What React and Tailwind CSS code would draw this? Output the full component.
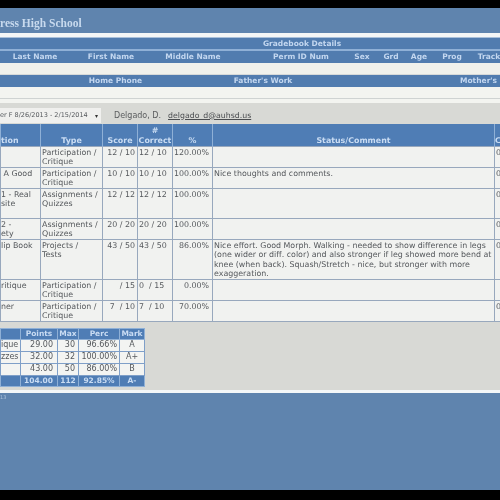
const sans = { fontFamily: '"DejaVu Sans", sans-serif' };

const studentCols = [
  ['Last Name', 'w-[70px]'],
  ['First Name', 'w-[82px]'],
  ['Middle Name', 'w-[82px]'],
  ['', 'w-[23px]'],
  ['Perm ID Num', 'w-[88px]'],
  ['Sex', 'w-[34px]'],
  ['Grd', 'w-[24px]'],
  ['Age', 'w-[32px]'],
  ['Prog', 'w-[34px]'],
  ['Track', 'w-[40px]'],
];

const rows = [
  { h: 'h-[21px]', name: '', type: 'Participation /\nCritique', score: '12 / 10', correct: '12 / 10', pct: '120.00%', comment: '', last: '0' },
  { h: 'h-[21px]', name: ' A Good', type: 'Participation /\nCritique', score: '10 / 10', correct: '10 / 10', pct: '100.00%', comment: 'Nice thoughts and comments.', last: '0' },
  { h: 'h-[30px]', name: '1 - Real\nsite', type: 'Assignments /\nQuizzes', score: '12 / 12', correct: '12 / 12', pct: '100.00%', comment: '', last: '0' },
  { h: 'h-[21px]', name: '2 -\nety', type: 'Assignments /\nQuizzes', score: '20 / 20', correct: '20 / 20', pct: '100.00%', comment: '', last: '0' },
  { h: 'h-[40px]', name: 'lip Book', type: 'Projects /\nTests', score: '43 / 50', correct: '43 / 50', pct: '86.00%', comment: 'Nice effort. Good Morph. Walking - needed to show difference in legs (one wider or diff. color) and also stronger if leg showed more bend at knee (when back). Squash/Stretch - nice, but stronger with more exaggeration.', last: '0' },
  { h: 'h-[21px]', name: 'ritique', type: 'Participation /\nCritique', score: '/ 15', correct: '0\u00a0 / 15', pct: '0.00%', comment: '', last: '' },
  { h: 'h-[21px]', name: 'ner', type: 'Participation /\nCritique', score: '7\u00a0 / 10', correct: '7\u00a0 / 10', pct: '70.00%', comment: '', last: '0' },
];

const summary = [
  ['ique', '29.00', '30', '96.66%', 'A'],
  ['zzes', '32.00', '32', '100.00%', 'A+'],
  ['', '43.00', '50', '86.00%', 'B'],
];

const th = 'border-x border-[#8fb0d6] align-bottom pb-0 leading-[10px] font-bold text-[#c9dcf3]';
const td = 'border border-[#98a8bd] align-top pt-px leading-[9.5px]';
const sumTh = 'border border-[#8fb0d6] font-bold text-[7.5px] text-[#c9dcf3]';
const sumTd = 'border border-[#7f9fc8]';

export default function App() {
  return (
    <div className="w-[500px] h-[500px] bg-black overflow-hidden">
      <div style={sans} className="mt-[8px] h-[482px] flex flex-col bg-[#5f84ae] blur-[0.7px] text-[7.5px]">
        <div className="h-[25px] pt-[6px] flex items-center font-bold text-[11.5px] text-[#c8daee] [font-family:'Liberation_Serif',serif]">
          ress High School
        </div>
        <div className="h-[4px] bg-[#f4f6f6]" />
        <div className="h-px bg-[#a9c0da]" />
        <div className="h-[11px] bg-[#517caf] flex items-center font-bold text-[#c3d7f0]">
          <span className="w-[500px] pl-[104px] text-center">Gradebook Details</span>
        </div>
        <div className="h-[2px] bg-[#8fb0d6]" />
        <div className="h-[12px] bg-[#517caf] flex items-center font-bold text-[#c3d7f0]">
          {studentCols.map(([label, w]) => (
            <span key={w + label} className={`${w} shrink-0 text-center whitespace-nowrap`}>{label}</span>
          ))}
        </div>
        <div className="h-[11px] bg-[#f0f1ec]" />
        <div className="h-px bg-[#d7dad9]" />
        <div className="h-[12px] bg-[#517caf] flex items-center font-bold text-[#c3d7f0]">
          <span className="w-[88px] shrink-0" />
          <span className="w-[55px] shrink-0 text-center whitespace-nowrap">Home Phone</span>
          <span className="w-[90px] shrink-0" />
          <span className="w-[60px] shrink-0 text-center whitespace-nowrap">Father's Work</span>
          <span className="w-[167px] shrink-0" />
          <span className="whitespace-nowrap">Mother's</span>
        </div>
        <div className="h-[11px] bg-[#f3f4f0]" />
        <div className="h-px bg-[#cfd3d2]" />
        <div className="h-[4px] bg-[#f3f4f0]" />

        <div className="h-[287px] bg-[#d8d9d5] text-[#55585c]">
          <div className="h-[21px] flex items-center pt-[4px]">
            <div className="w-[101px] h-[15px] bg-[#f0f0ee] flex items-center justify-between pr-[3px] text-[6.5px] whitespace-nowrap overflow-hidden">
              <span>er F 8/26/2013 - 2/15/2014</span>
              <span className="text-[6px] text-[#333]">▾</span>
            </div>
            <span className="ml-[13px] text-[8px] text-[#5a5c5e]">Delgado, D.</span>
            <span className="ml-[7px] text-[7.8px] text-[#4b4d50] underline">delgado_d@auhsd.us</span>
          </div>

          <table className="w-[500px] table-fixed border-collapse text-[7.9px]">
            <colgroup>
              <col className="w-[40px]" />
              <col className="w-[62px]" />
              <col className="w-[35px]" />
              <col className="w-[35px]" />
              <col className="w-[40px]" />
              <col className="w-[282px]" />
              <col className="w-[6px]" />
            </colgroup>
            <thead>
              <tr className="h-[22px] bg-[#4f7db5]">
                <th className={`${th} text-left`}>tion</th>
                <th className={`${th} text-center`}>Type</th>
                <th className={`${th} text-center`}>Score</th>
                <th className={`${th} text-center`}>#<br />Correct</th>
                <th className={`${th} text-center`}>%</th>
                <th className={`${th} text-center`}>Status/Comment</th>
                <th className={`${th} text-left overflow-hidden`}>C</th>
              </tr>
            </thead>
            <tbody className="bg-[#f1f2f0]">
              {rows.map((r) => (
                <tr key={r.type + r.pct + r.name} className={r.h}>
                  <td className={`${td} overflow-hidden whitespace-pre-wrap`}>{r.name}</td>
                  <td className={`${td} px-px whitespace-pre-line`}>{r.type}</td>
                  <td className={`${td} text-right pr-[2px] whitespace-nowrap`}>{r.score}</td>
                  <td className={`${td} px-px whitespace-nowrap`}>{r.correct}</td>
                  <td className={`${td} text-right pr-[3px]`}>{r.pct}</td>
                  <td className={`${td} px-px`}>{r.comment}</td>
                  <td className={`${td} px-px overflow-hidden`}>{r.last}</td>
                </tr>
              ))}
            </tbody>
          </table>

          <table className="mt-[6px] w-[144px] table-fixed border-collapse text-[8px] leading-[10px]">
            <colgroup>
              <col className="w-[20px]" />
              <col className="w-[37px]" />
              <col className="w-[21px]" />
              <col className="w-[41px]" />
              <col className="w-[25px]" />
            </colgroup>
            <thead>
              <tr className="h-[11px] bg-[#4f7db5]">
                <th className={sumTh}></th>
                <th className={`${sumTh} text-center`}>Points</th>
                <th className={`${sumTh} text-center`}>Max</th>
                <th className={`${sumTh} text-center`}>Perc</th>
                <th className={`${sumTh} text-center`}>Mark</th>
              </tr>
            </thead>
            <tbody className="bg-[#f3f4f2]">
              {summary.map(([name, pts, max, perc, mark]) => (
                <tr key={pts} className="h-[12px]">
                  <td className={`${sumTd} overflow-hidden text-left`}>{name}</td>
                  <td className={`${sumTd} text-right pr-[4px]`}>{pts}</td>
                  <td className={`${sumTd} text-right pr-[3px]`}>{max}</td>
                  <td className={`${sumTd} text-right pr-[2px]`}>{perc}</td>
                  <td className={`${sumTd} text-center`}>{mark}</td>
                </tr>
              ))}
              <tr className="h-[11px] bg-[#4f7db5]">
                <td className={sumTh}></td>
                <td className={`${sumTh} text-right pr-[4px]`}>104.00</td>
                <td className={`${sumTh} text-center`}>112</td>
                <td className={`${sumTh} text-center`}>92.85%</td>
                <td className={`${sumTh} text-center`}>A-</td>
              </tr>
            </tbody>
          </table>
        </div>

        <div className="h-[3px] bg-[#f4f7f8]" />
        <div className="flex-1 pt-px text-[5px] text-[#a9c0da]">13</div>
      </div>
    </div>
  );
}
